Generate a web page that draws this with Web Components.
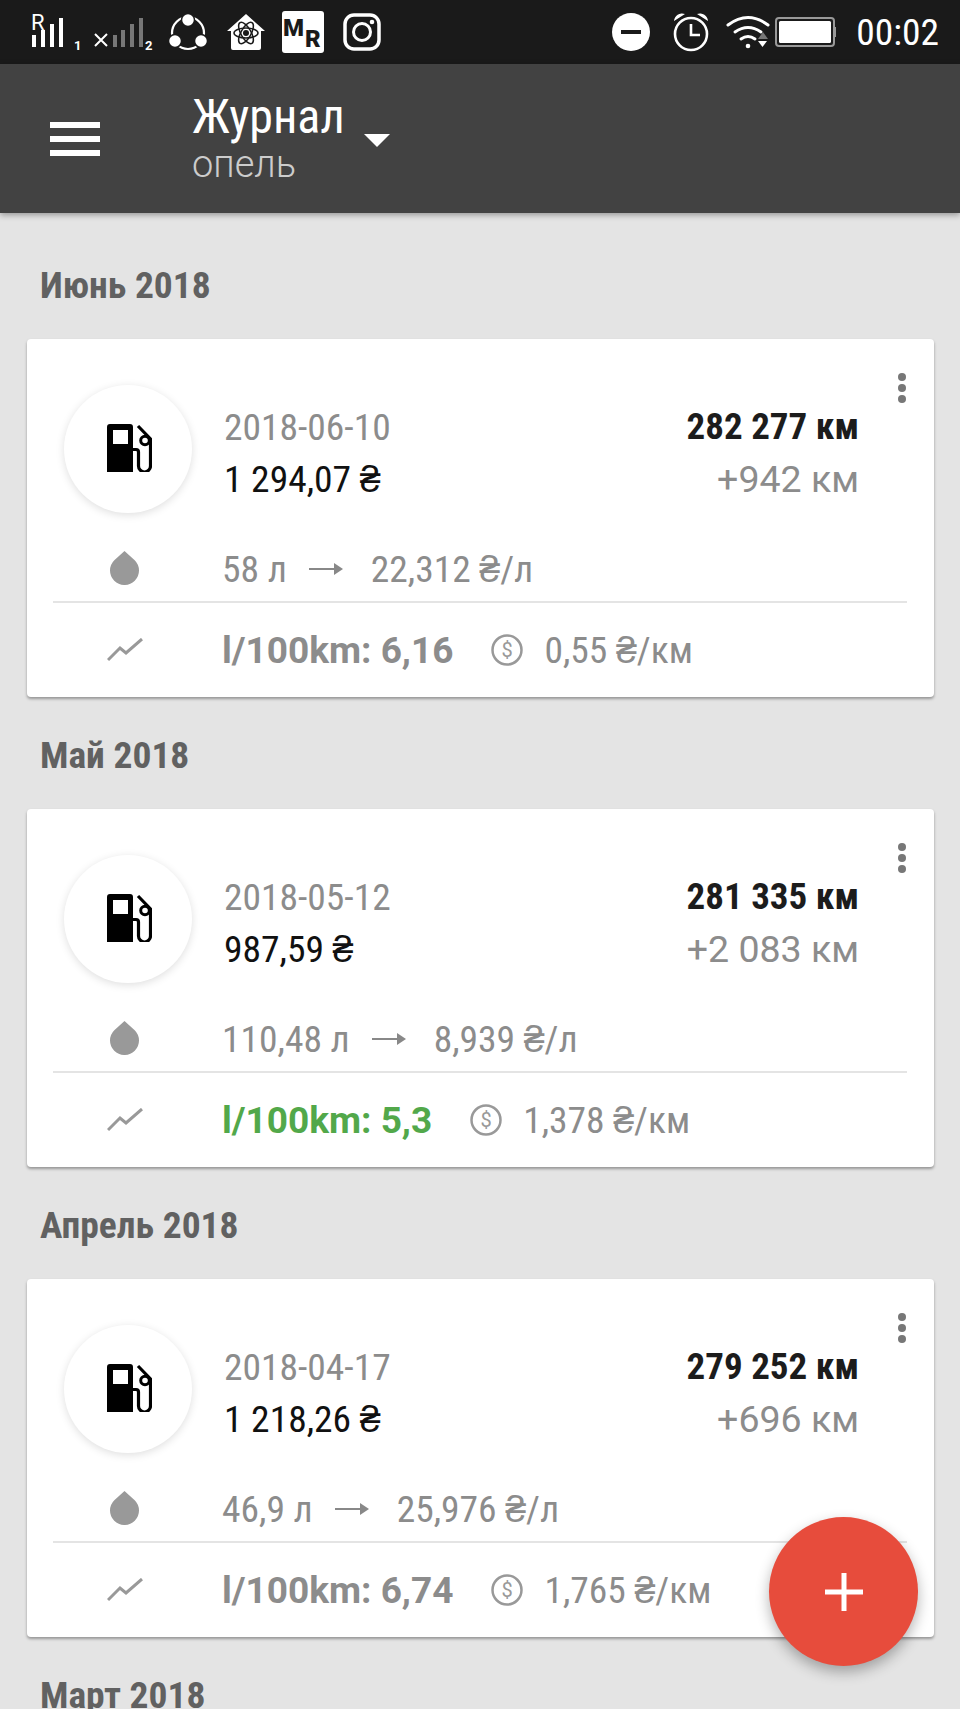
<!DOCTYPE html>
<html lang="ru">
<head>
<meta charset="utf-8">
<title>Журнал</title>
<style>
  html, body { margin: 0; height: 1709px; overflow: hidden; background: #e4e4e4; }
  body { font-family: Roboto, "Liberation Sans", sans-serif; position: relative; }
</style>
</head>
<body>
<status-bar></status-bar>
<app-header title="Журнал" subtitle="опель"></app-header>
<fuel-list></fuel-list>
<add-button></add-button>

<script>
class StatusBar extends HTMLElement {
  constructor() {
    super();
    const shadow = this.attachShadow({ mode: "open" });
    shadow.innerHTML = `
      <style>
        :host { display: flex; align-items: center; height: 64px; background: #1a1a1a; color: #fff; padding-left: 32px; box-sizing: border-box; }
        svg { display: block; flex: none; }
        .time { font: 400 37.5px Roboto, sans-serif; font-stretch: 75%; margin-left: 19px; }
        .spacer { flex: 1; }
      </style>
      <svg width="124" height="64" viewBox="0 0 124 64" fill="#fff">
        <text x="-1" y="30" font-family="Roboto" font-size="22">R</text>
        <rect x="0" y="35" width="4" height="12"/><rect x="9" y="30" width="4" height="17"/><rect x="18" y="24" width="4" height="23"/><rect x="27" y="18" width="4" height="29"/>
        <text x="42" y="50" font-family="Roboto" font-size="13" font-weight="700">1</text>
        <path d="M63 34l12 12M75 34l-12 12" stroke="#fff" stroke-width="2" fill="none"/>
        <g fill="#777"><rect x="81" y="35" width="4" height="12"/><rect x="89" y="30" width="4" height="17"/><rect x="98" y="24" width="4" height="23"/><rect x="107" y="18" width="4" height="29"/></g>
        <text x="113" y="50" font-family="Roboto" font-size="13" font-weight="700">2</text>
      </svg>
      <svg style="margin-left:12px" width="40" height="64" viewBox="0 0 40 64" fill="#fff">
        <circle cx="20" cy="33" r="16" fill="none" stroke="#fff" stroke-width="2.2"/>
        <circle cx="20" cy="20" r="6.5" stroke="#1a1a1a" stroke-width="1.5"/><circle cx="7" cy="41" r="6.5" stroke="#1a1a1a" stroke-width="1.5"/><circle cx="33" cy="41" r="6.5" stroke="#1a1a1a" stroke-width="1.5"/>
      </svg>
      <svg style="margin-left:18px" width="40" height="64" viewBox="0 0 40 64">
        <path d="M20 14L39 31h-4v17a2 2 0 0 1-2 2H7a2 2 0 0 1-2-2V31H1z" fill="#fff"/>
        <g fill="none" stroke="#1a1a1a" stroke-width="1.5"><ellipse cx="20" cy="33" rx="12" ry="5"/><ellipse cx="20" cy="33" rx="12" ry="5" transform="rotate(60 20 33)"/><ellipse cx="20" cy="33" rx="12" ry="5" transform="rotate(120 20 33)"/></g>
        <circle cx="20" cy="33" r="3" fill="#1a1a1a"/>
      </svg>
      <svg style="margin-left:15px" width="44" height="64" viewBox="0 0 44 64">
        <rect x="1" y="11" width="42" height="42" rx="3" fill="#fff"/>
        <text x="2" y="36" font-family="Roboto" font-weight="900" font-size="24" fill="#1a1a1a">M</text>
        <text x="24" y="47" font-family="Roboto" font-weight="900" font-size="24" fill="#1a1a1a">R</text>
      </svg>
      <svg style="margin-left:17px" width="40" height="64" viewBox="0 0 40 64" fill="none" stroke="#fff">
        <rect x="3" y="15" width="34" height="34" rx="9" stroke-width="3.5"/>
        <circle cx="20" cy="32" r="8.5" stroke-width="3"/>
        <circle cx="30" cy="22" r="2.3" fill="#fff" stroke="none"/>
      </svg>
      <div class="spacer"></div>
      <svg width="40" height="64" viewBox="0 0 40 64">
        <circle cx="20" cy="32" r="19" fill="#fff"/>
        <rect x="10" y="30" width="20" height="4" fill="#1a1a1a"/>
      </svg>
      <svg style="margin-left:21px" width="38" height="64" viewBox="0 0 38 64" fill="none" stroke="#fff">
        <circle cx="19" cy="34" r="16" stroke-width="2.6"/>
        <path d="M19 24v11h9" stroke-width="2.6"/>
        <path d="M2 21a8 8 0 0 1 11-7zM36 21a8 8 0 0 0-11-7z" fill="#fff" stroke="none"/>
      </svg>
      <svg style="margin-left:16px" width="44" height="64" viewBox="0 0 44 64" fill="none" stroke="#fff" stroke-linecap="round">
        <path d="M2 25q20-15 40 0" stroke-width="3"/>
        <path d="M9 32q13-9 26 0" stroke-width="3"/>
        <path d="M15 39q7-5 14 0" stroke-width="3"/>
        <circle cx="22" cy="46" r="2.3" fill="#fff" stroke="none"/>
        <path d="M32 39l5-7 5 7z" fill="#777" stroke="none"/>
        <path d="M32 41h9l-4.500 6z" fill="#fff" stroke="none"/>
      </svg>
      <svg style="margin-left:5px" width="62" height="64" viewBox="0 0 62 64">
        <rect x="1" y="18" width="58" height="28" rx="3" fill="none" stroke="#999" stroke-width="2"/>
        <rect x="4" y="21" width="52" height="22" rx="1.500" fill="#fff"/>
        <rect x="59" y="27" width="2" height="10" fill="#999"/>
      </svg>
      <span class="time">00:02</span>
      <div style="width:21px;flex:none"></div>
    `;
  }
}

class AppHeader extends HTMLElement {
  constructor() {
    super();
    const shadow = this.attachShadow({ mode: "open" });
    shadow.innerHTML = `
      <style>
        :host { display: flex; align-items: center; height: 149px; background: #424242; color: #fff; padding-left: 50px; box-shadow: 0 2px 6px rgba(0,0,0,.35); position: relative; }
        .burger { width: 50px; display: flex; flex-direction: column; gap: 8px; margin-right: 92px; }
        .burger i { display: block; height: 6px; background: #fff; }
        .titles { display: flex; flex-direction: column; margin-top: -4px; }
        .title { font-size: 48px; line-height: 54px; font-stretch: 75%; }
        .sub { font-size: 38px; line-height: 40px; font-weight: 300; color: #ccc; }
        .caret { width: 0; height: 0; border: 13.5px solid transparent; border-top: 13px solid #fff; border-bottom: 0; margin-left: 19px; margin-top: 4px; }
      </style>
      <div class="burger"><i></i><i></i><i></i></div>
      <div class="titles">
        <div class="title">${this.getAttribute("title")}</div>
        <div class="sub">${this.getAttribute("subtitle")}</div>
      </div>
      <div class="caret"></div>
    `;
  }
}

class MonthTitle extends HTMLElement {
  constructor() {
    super();
    const shadow = this.attachShadow({ mode: "open" });
    shadow.innerHTML = `
      <style>
        :host { display: flex; align-items: center; box-sizing: border-box; height: 112px; padding: 4px 0 0 40px; color: #616161; font-size: 37.5px; line-height: 30px; font-weight: 700; font-stretch: 75%; }
      </style>
      <slot></slot>
    `;
  }
}

class FuelCard extends HTMLElement {
  constructor() {
    super();
    const shadow = this.attachShadow({ mode: "open" });
    const d = name => this.getAttribute(name);
    shadow.innerHTML = `
      <style>
        :host { display: block; margin: 0 26px 0 27px; background: #fff; border-radius: 4px; box-shadow: 0 2px 3px rgba(0,0,0,.35); position: relative; font-size: 37.5px; color: #8c8c8c; }
        .cond { font-stretch: 75%; }
        .uah { font-family: "Open Sans", Roboto, sans-serif; font-stretch: 100%; line-height: 0; }
        .menu { position: absolute; top: 34px; right: 28px; display: flex; flex-direction: column; gap: 3px; }
        .menu i { width: 8px; height: 8px; border-radius: 50%; background: #777; }
        .top { display: flex; align-items: center; padding: 46px 75px 0 37px; }
        .circle { width: 128px; height: 128px; border-radius: 50%; background: #fff; box-shadow: 0 2px 8px rgba(0,0,0,.13); display: flex; align-items: center; justify-content: center; flex: none; }
        .circle svg { margin: -2px 0 0 2px; }
        .left { margin-left: 32px; margin-top: 8px; line-height: 52px; }
        .right { margin-left: auto; margin-top: 8px; line-height: 52px; text-align: right; }
        .price { color: #111; }
        .odo { color: #1c1c1c; font-weight: 700; font-size: 37px; }
        .row { display: flex; align-items: center; }
        .ico { width: 195px; flex: none; display: flex; justify-content: center; }
        .fuel { height: 46px; margin-top: 33px; }
        .fuel .ico svg { margin-top: -3px; }
        .fuel svg.arrow { margin: 0 28px 0 22px; }
        hr { border: 0; height: 2px; background: #e4e4e4; margin: 9px 27px 0 26px; }
        .stats { height: 94px; }
        .cons { font-weight: 700; font-size: 37px; }
        .cons.good { color: #52a84a; }
        .coin { margin: 0 21px 0 38px; }
      </style>
      <div class="menu"><i></i><i></i><i></i></div>
      <div class="top">
        <div class="circle">
          <svg width="45" height="48" viewBox="0 0 45 48">
            <path d="M0 3a3 3 0 0 1 3-3h20a3 3 0 0 1 3 3v45H0zM6 6v14h15V6z" fill-rule="evenodd"/>
            <path d="M26 25.500h3q2.500 0 2.500 2.500v14a6 6 0 0 0 12 0V15L31 2" fill="none" stroke="#000" stroke-width="3.200"/>
            <circle cx="38" cy="16.500" r="4.300" fill="none" stroke="#000" stroke-width="3"/>
          </svg>
        </div>
        <div class="left">
          <div class="cond">${d("date")}</div>
          <div class="price cond">${d("price")}</div>
        </div>
        <div class="right">
          <div class="odo cond">${d("odo")}</div>
          <div>${d("delta")}</div>
        </div>
      </div>
      <div class="row fuel">
        <div class="ico"><svg width="29" height="34" viewBox="0 0 29 34"><path d="M14.500 0L24.700 9.200A14.500 14.500 0 1 1 4.300 9.200z" fill="#999"/></svg></div>
        <span class="cond">${d("volume")}</span>
        <svg class="arrow" width="34" height="14" viewBox="0 0 34 14"><path d="M0 6h26v2H0z" fill="#888"/><path d="M25 1l9 6-9 6z" fill="#888"/></svg>
        <span class="cond">${d("rate")}</span>
      </div>
      <hr>
      <div class="row stats">
        <div class="ico"><svg width="36" height="24" viewBox="0 0 36 24"><path d="M1 22l12-12 6 5L35 1" fill="none" stroke="#999" stroke-width="3"/></svg></div>
        <span class="cons ${d("good") !== null ? "good" : ""}">l/100km: ${d("cons")}</span>
        <svg class="coin" width="32" height="32" viewBox="0 0 32 32"><circle cx="16" cy="16" r="14.500" fill="none" stroke="#999" stroke-width="2.500"/><text x="16" y="23" text-anchor="middle" font-family="Roboto" font-size="20" fill="#999">$</text></svg>
        <span class="cond">${d("cost")}</span>
      </div>
    `;
  }
}

class FuelList extends HTMLElement {
  constructor() {
    super();
    const shadow = this.attachShadow({ mode: "open" });
    const uah = "<span class='uah'>₴</span>";
    const months = [
      { title: "Июнь 2018", date: "2018-06-10", price: "1 294,07 " + uah, odo: "282 277 км", delta: "+942 км", volume: "58 л", rate: "22,312 " + uah + "/л", cons: "6,16", cost: "0,55 " + uah + "/км" },
      { title: "Май 2018", date: "2018-05-12", price: "987,59 " + uah, odo: "281 335 км", delta: "+2 083 км", volume: "110,48 л", rate: "8,939 " + uah + "/л", cons: "5,3", cost: "1,378 " + uah + "/км", good: true },
      { title: "Апрель 2018", date: "2018-04-17", price: "1 218,26 " + uah, odo: "279 252 км", delta: "+696 км", volume: "46,9 л", rate: "25,976 " + uah + "/л", cons: "6,74", cost: "1,765 " + uah + "/км" }
    ];
    shadow.innerHTML = `
      <style>
        :host { display: block; padding-top: 14px; }
      </style>
      ${months.map(m => `
        <month-title>${m.title}</month-title>
        <fuel-card date="${m.date}" price="${m.price}" odo="${m.odo}" delta="${m.delta}" volume="${m.volume}" rate="${m.rate}" cons="${m.cons}" cost="${m.cost}" ${m.good ? "good" : ""}></fuel-card>
      `).join("")}
      <month-title>Март 2018</month-title>
    `;
  }
}

class AddButton extends HTMLElement {
  constructor() {
    super();
    const shadow = this.attachShadow({ mode: "open" });
    shadow.innerHTML = `
      <style>
        :host { position: absolute; left: 769px; top: 1517px; width: 149px; height: 149px; border-radius: 50%; background: #e74c3c; box-shadow: 0 6px 14px rgba(0,0,0,.3); display: flex; align-items: center; justify-content: center; }
      </style>
      <svg width="38" height="38" viewBox="0 0 38 38"><path d="M16.500 0h5v16.500H38v5H21.500V38h-5V21.500H0v-5h16.500z" fill="#fff"/></svg>
    `;
  }
}

customElements.define("status-bar", StatusBar);
customElements.define("app-header", AppHeader);
customElements.define("month-title", MonthTitle);
customElements.define("fuel-card", FuelCard);
customElements.define("fuel-list", FuelList);
customElements.define("add-button", AddButton);
</script>
</body>
</html>
